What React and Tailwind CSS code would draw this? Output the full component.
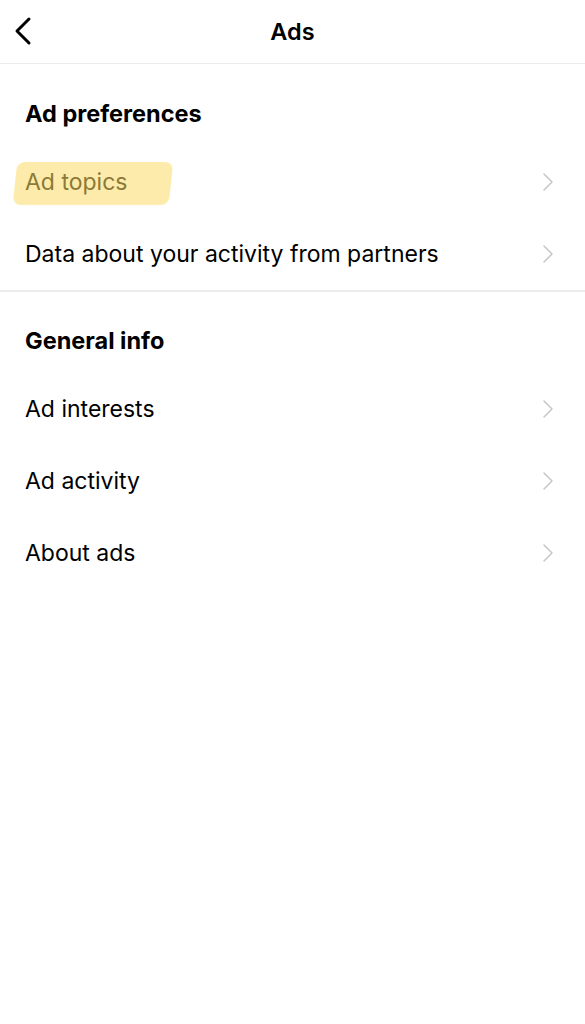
const sections = [
  {
    title: 'Ad preferences',
    rows: [
      { label: 'Ad topics', marked: true },
      { label: 'Data about your activity from partners' },
    ],
  },
  {
    title: 'General info',
    rows: [{ label: 'Ad interests' }, { label: 'Ad activity' }, { label: 'About ads' }],
  },
];

function Chevron() {
  return (
    <svg width="12" height="20" viewBox="0 0 12 20" fill="none" className="shrink-0">
      <path d="M2 2l8 8-8 8" stroke="#c5c5c7" strokeWidth="1.5" strokeLinecap="round" strokeLinejoin="round" />
    </svg>
  );
}

function Row({ label, marked }) {
  return (
    <div className="flex h-[72px] items-center justify-between pl-[25px] pr-[31px]">
      {marked ? (
        <span className="relative">
          <span className="absolute -left-[10px] -right-[44px] top-[-3px] bottom-[-5px] -skew-x-6 rounded-[8px] bg-[#fce9a2] opacity-90 blur-[0.6px]" />
          <span className="relative text-[#8c7a36]">{label}</span>
        </span>
      ) : (
        <span className="text-black">{label}</span>
      )}
      <Chevron />
    </div>
  );
}

export default function App() {
  return (
    <div className="min-h-[1024px] w-full bg-white text-[23px] font-['Inter',sans-serif]">
      <header className="relative flex h-[64px] items-center justify-center border-b border-[#ececec]">
        <button className="absolute left-[12px] top-[16px] p-0">
          <svg width="22" height="30" viewBox="0 0 22 30" fill="none">
            <path d="M17 3L5 15l12 12" stroke="#000" strokeWidth="3" strokeLinecap="round" strokeLinejoin="round" />
          </svg>
        </button>
        <h1 className="text-[23.5px] font-semibold text-black">Ads</h1>
      </header>

      {sections.map((s, i) => (
        <section key={s.title} className={i === 0 ? 'pt-[18px] border-b-2 border-[#ececec]' : 'pt-[17px]'}>
          <div className="flex h-[64px] items-center pl-[25px]">
            <h2 className="text-[23.5px] font-bold text-black">{s.title}</h2>
          </div>
          {s.rows.map((r) => (
            <Row key={r.label} {...r} />
          ))}
        </section>
      ))}
    </div>
  );
}
